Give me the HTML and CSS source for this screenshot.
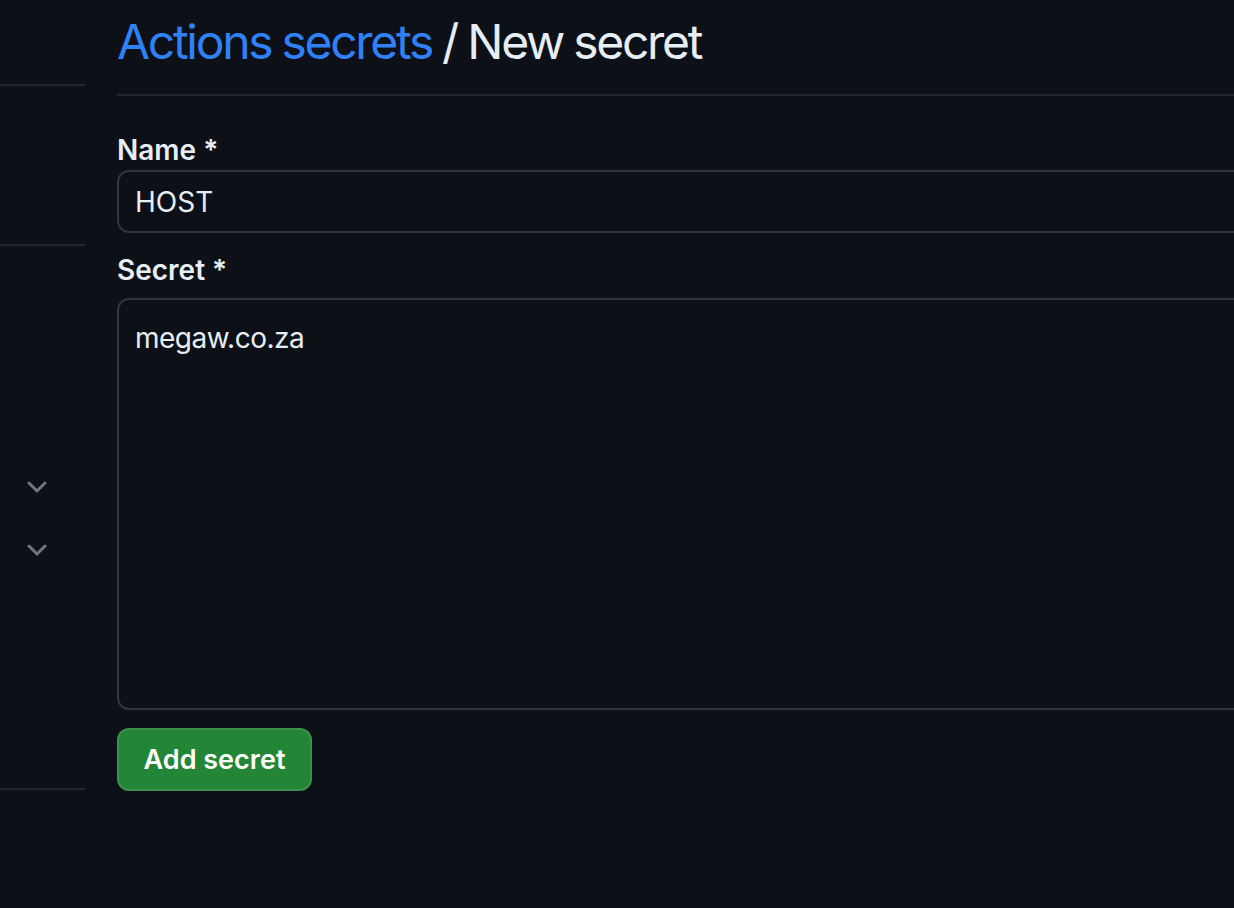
FILE: index.html
```html
<!DOCTYPE html>
<html lang="en">
<head>
<meta charset="utf-8">
<title>New secret</title>
<link rel="stylesheet" href="styles.css">
</head>
<body>
<div class="layout">
  <nav class="sidebar">
    <div class="nav-group nav-top"></div>
    <div class="nav-group nav-mid">
      <div class="nav-row"></div>
      <div class="nav-row"></div>
    </div>
    <div class="nav-group nav-list">
      <div class="nav-row"></div>
      <div class="nav-row"></div>
      <div class="nav-row"></div>
      <div class="nav-row">
        <svg class="chevron" viewBox="0 0 20 12" aria-hidden="true"><path d="M2 2l8 8 8-8"/></svg>
      </div>
      <div class="nav-row">
        <svg class="chevron" viewBox="0 0 20 12" aria-hidden="true"><path d="M2 2l8 8 8-8"/></svg>
      </div>
      <div class="nav-row"></div>
      <div class="nav-row"></div>
      <div class="nav-row"></div>
    </div>
  </nav>

  <main class="content">
    <div class="subhead">
      <h2 class="subhead-heading"><a class="crumb-link" href="#">Actions secrets</a> / New secret</h2>
    </div>

    <form class="secret-form">
      <label class="form-label label-name" for="secret_name">Name *</label>
      <input class="form-control" id="secret_name" type="text" value="HOST">

      <label class="form-label label-secret" for="secret_value">Secret *</label>
      <textarea class="form-control form-textarea" id="secret_value">megaw.co.za</textarea>

      <button class="btn-primary" type="button">Add secret</button>
    </form>
  </main>
</div>
</body>
</html>
```

FILE: styles.css
```css
html, body {
  margin: 0;
  padding: 0;
  background: #0d1117;
  overflow: hidden;
}

body {
  font-family: Inter, "Noto Sans", sans-serif;
  color: #e6edf3;
}

.layout {
  display: flex;
  gap: 32px;
  width: 1400px;
}

/* left settings navigation, scrolled partly out of view */
.sidebar {
  width: 85px;
  flex: none;
}

.nav-group {
  border-bottom: 2px solid #21262d;
  box-sizing: border-box;
}

.nav-top {
  height: 86px;
}

.nav-mid {
  height: 160px;
  padding-top: 16px;
}

.nav-list {
  padding: 20px 0 18px;
}

.nav-row {
  height: 63px;
  display: flex;
  align-items: center;
  justify-content: flex-end;
  padding-right: 38px;
}

.chevron {
  width: 20px;
  height: 12px;
  fill: none;
  stroke: #6e7681;
  stroke-width: 3;
  stroke-linecap: round;
  stroke-linejoin: round;
}

/* main column */
.content {
  flex: 1;
  min-width: 0;
}

.subhead {
  padding: 12px 0 22px;
  border-bottom: 2px solid #21262d;
}

.subhead-heading {
  margin: 0;
  font-size: 48px;
  line-height: 60px;
  font-weight: 400;
  letter-spacing: -2.3px;
  word-spacing: -1px;
  color: #e6edf3;
}

.crumb-link {
  color: #2f81f7;
  text-decoration: none;
}

.secret-form {
  display: flex;
  flex-direction: column;
  align-items: flex-start;
}

.form-label {
  font-size: 28px;
  line-height: 40px;
  font-weight: 600;
  color: #e6edf3;
}

.label-name {
  margin-top: 34px;
}

.label-secret {
  margin-top: 17px;
  margin-bottom: 8px;
}

.form-control {
  box-sizing: border-box;
  width: 100%;
  height: 63px;
  margin: 0;
  padding: 0 16px;
  font-family: Inter, "Noto Sans", sans-serif;
  font-size: 28px;
  line-height: 40px;
  color: #e6edf3;
  background: #0d1117;
  border: 2px solid #30363d;
  border-radius: 12px;
  outline: none;
}

.form-textarea {
  height: 412px;
  padding-top: 18px;
  letter-spacing: -0.5px;
  resize: none;
  display: block;
}

.btn-primary {
  margin-top: 18px;
  box-sizing: border-box;
  width: 195px;
  height: 63px;
  padding: 0;
  font-family: Inter, "Noto Sans", sans-serif;
  font-size: 27px;
  font-weight: 600;
  color: #ffffff;
  background: #238636;
  border: 2px solid #3c8f4c;
  border-radius: 12px;
  cursor: pointer;
}
```
